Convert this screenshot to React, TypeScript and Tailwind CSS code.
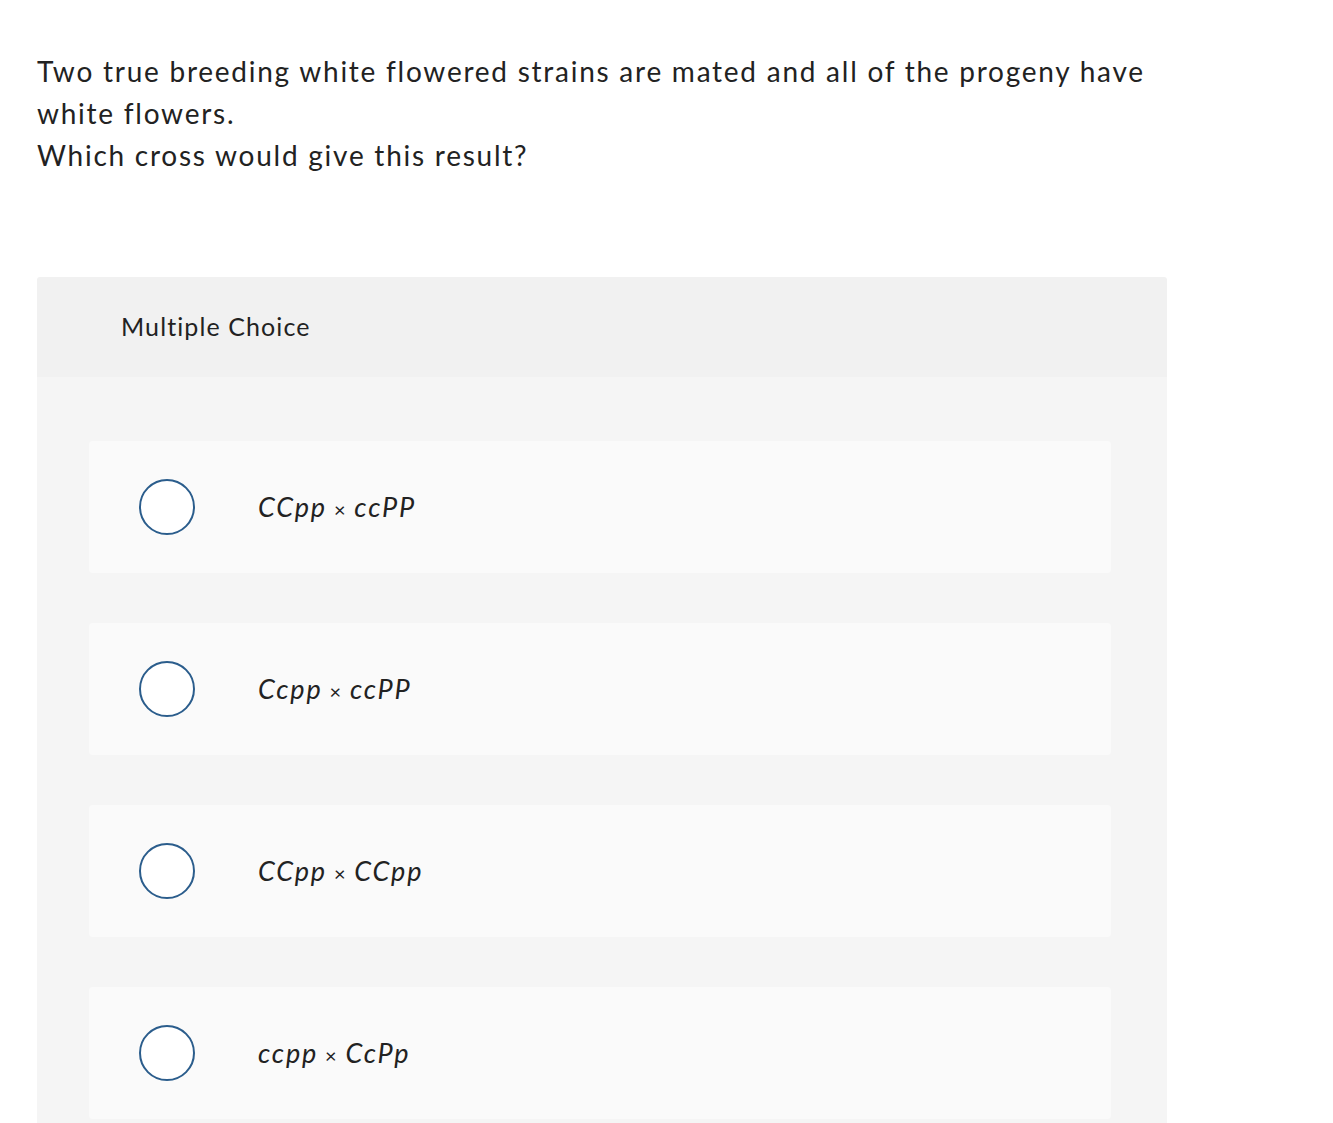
const options = [
  { left: "CCpp", right: "ccPP" },
  { left: "Ccpp", right: "ccPP" },
  { left: "CCpp", right: "CCpp" },
  { left: "ccpp", right: "CcPp" },
];

export default function App() {
  return (
    <div className="min-h-screen bg-white text-[#222] font-['Lato','Noto_Sans',sans-serif]">
      <div className="pl-[37px] pt-[50px] w-[1167px]">
        <p className="text-[28px] leading-[42px] tracking-[1.75px]">
          Two true breeding white flowered strains are mated and all of the progeny have white flowers.
          <br />
          Which cross would give this result?
        </p>

        <div className="mt-[101px] rounded-t-[3px] overflow-hidden">
          <div className="h-[100px] bg-[#f1f1f1] flex items-center pl-[84px]">
            <span className="text-[25px] tracking-[1.1px]">Multiple Choice</span>
          </div>
          <div className="bg-[#f5f5f5] pt-[64px] pb-[40px] pl-[52px] pr-[56px] flex flex-col gap-[50px]">
            {options.map((o, i) => (
              <div key={i} className="h-[132px] bg-[#fafafa] rounded-[4px] flex items-center pl-[50px]">
                <div className="w-[56px] h-[56px] rounded-full border-2 border-[#2b5d8c] bg-white" />
                <span className="ml-[63px] text-[27px] italic tracking-[1.8px]">
                  {o.left}
                  <span className="not-italic text-[20px] mx-[7px]">×</span>
                  {o.right}
                </span>
              </div>
            ))}
          </div>
        </div>
      </div>
    </div>
  );
}
